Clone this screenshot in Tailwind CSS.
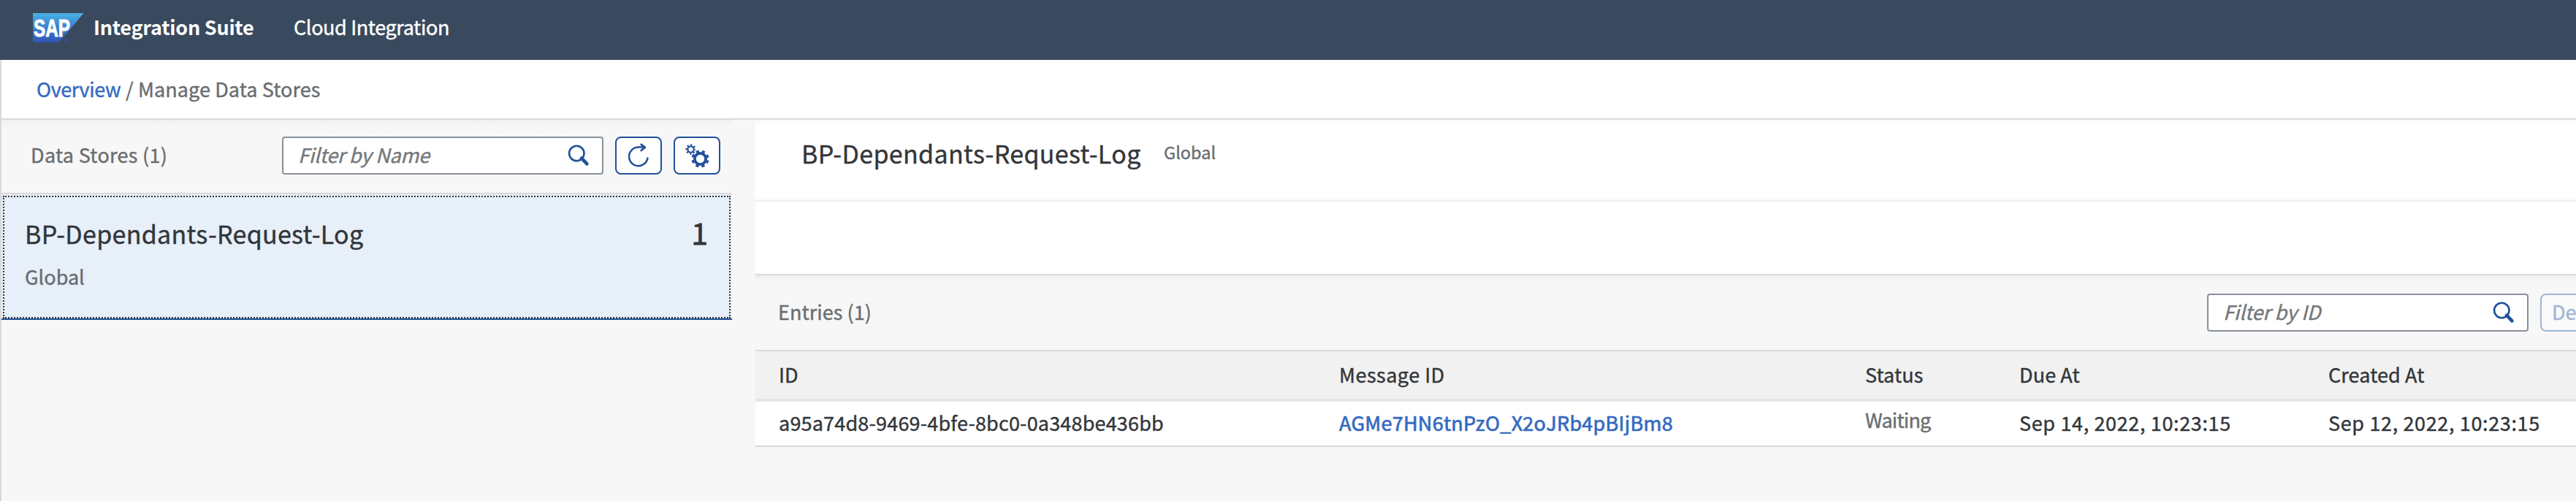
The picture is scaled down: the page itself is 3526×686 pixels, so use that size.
<!DOCTYPE html>
<html lang="en">
<head>
<meta charset="utf-8">
<title>Manage Data Stores</title>
<script src="https://cdn.jsdelivr.net/npm/@tailwindcss/browser@4"></script>
</head>
<body class="w-[3526px] h-[686px] overflow-hidden bg-[#f7f7f7] text-[#32363a] text-[27px] leading-[40px] whitespace-nowrap font-['Noto_Sans_CJK_SC','Noto_Sans',sans-serif] [-webkit-text-stroke:0.4px]">
<svg class="hidden">
  <symbol id="search" viewBox="0 0 30 30">
    <circle cx="12.3" cy="12" r="10.2" fill="none" stroke="#22519a" stroke-width="2.6"/>
    <path d="M19 18.7 L26.4 26.4" fill="none" stroke="#22519a" stroke-width="4.6" stroke-linecap="round"/>
  </symbol>
</svg>

<header class="h-[82px] bg-[#3a4a5e] text-white flex items-center pl-[45px]">
  <svg class="w-[70px] h-[40px] -mt-[6px] shrink-0" viewBox="0 0 70 40">
    <defs><linearGradient id="sap" x1="0" y1="0" x2="0" y2="1"><stop offset="0" stop-color="#4bb2e6"/><stop offset=".5" stop-color="#3b80cf"/><stop offset="1" stop-color="#2f56b4"/></linearGradient></defs>
    <path d="M0 0H69.5L36 40H0Z" fill="url(#sap)"/>
    <text x="1" y="32" font-family="Liberation Sans" font-weight="700" font-size="33" textLength="50" lengthAdjust="spacingAndGlyphs" fill="#fff" stroke="#fff" stroke-width="1">SAP</text>
    <circle cx="45.5" cy="37" r="1.8" fill="#2f56b4"/>
  </svg>
  <span class="w-[274px] ml-[13px] font-bold tracking-[-0.25px] -mt-[8px] [-webkit-text-stroke:0px]">Integration Suite</span>
  <span class="tracking-[-0.38px] -mt-[8px]">Cloud Integration</span>
</header>

<div class="h-[604px] border-l-2 border-[#d9d9d9] flex flex-col">
  <nav class="h-[82px] shrink-0 bg-white border-b-2 border-[#d9d9d9] flex items-center pl-[48px] text-[#6a6d70]">
    <span class="w-[122px] text-[#346ac0] tracking-[-0.4px]">Overview</span>
    <span class="w-[17px]">/</span>
    <span class="tracking-[0.08px]">Manage Data Stores</span>
  </nav>

  <div class="flex flex-1 min-h-0">
    <aside class="w-[1000px] shrink-0">
      <div class="h-[102px] border-b-2 border-[#d9d9d9] bg-linear-to-b from-[#f0f0f0] to-[#f7f7f7] to-[9px] flex items-center pb-[2px] pl-[40px] pr-4">
        <span class="flex-1 text-[#6a6d70] tracking-[0.3px] -mt-[2px]">Data Stores (1)</span>
        <div class="w-[440px] h-[52px] bg-white border-2 border-[#89919a] rounded-[4px] flex items-center justify-between pl-[20px] pr-[17px]">
          <span class="italic text-[#74777a] tracking-[-0.2px] -mt-[2px]">Filter by Name</span>
          <svg class="w-[30px] h-[30px]"><use href="#search"/></svg>
        </div>
        <div class="ml-4 w-[64px] h-[52px] bg-white border-2 border-[#22519a] rounded-[8px] flex items-center justify-center">
          <svg class="w-[32px] h-[36px]" viewBox="0 0 32 36" fill="none" stroke="#22519a" stroke-width="2.5" stroke-linecap="round" stroke-linejoin="round"><path d="M28.5 21.5A12.8 12.8 0 1 1 15.8 6.6H24.5"/><path d="M19.7 2.8L24.8 6.8L19.7 11" stroke-width="2.8"/></svg>
        </div>
        <div class="ml-4 w-[64px] h-[52px] bg-white border-2 border-[#22519a] rounded-[8px] flex items-center justify-center">
          <svg class="w-[34px] h-[34px]" viewBox="0 0 34 34" fill="none" stroke="#22519a">
            <circle cx="8.5" cy="8.5" r="4.2" stroke-width="2.2"/>
            <circle cx="8.5" cy="8.5" r="6" stroke-width="2.4" stroke-dasharray="2.1 2.612" stroke-dashoffset="1.05"/>
            <circle cx="21.5" cy="21.5" r="7.6" stroke-width="3.8"/>
            <circle cx="21.5" cy="21.5" r="10.5" stroke-width="3.2" stroke-dasharray="4.2 4.047" stroke-dashoffset="-2.02"/>
          </svg>
        </div>
      </div>
      <div class="h-[172px] bg-[#e7eff9] border-b-2 border-[#1f4f93] pt-[2px] px-[2px]">
        <div class="h-full border-2 border-dotted border-[#32363a] pl-[28px] pr-[29px]">
          <div class="flex items-center justify-between h-[60px] mt-[20px] leading-[60px]">
            <span class="text-[34px] tracking-[0.3px]">BP-Dependants-Request-Log</span>
            <span class="text-[41px] -mt-[6px] [-webkit-text-stroke:0.8px]">1</span>
          </div>
          <div class="text-[#6a6d70] mt-[9px]">Global</div>
        </div>
      </div>
    </aside>

    <main class="ml-[32px] flex-1 min-w-0 overflow-hidden">
      <div class="h-[112px] bg-linear-to-b from-[#f8f8f8] to-white to-[8px]">
        <div class="h-full bg-linear-to-t from-[#e9e9e9] via-[#f6f6f6] via-[2px] to-transparent to-[5px] flex items-center pl-[63px] pb-[20px]">
          <span class="w-[496px] text-[34px] tracking-[0.35px]">BP-Dependants-Request-Log</span>
          <span class="text-[23.5px] text-[#6a6d70] -mt-[4px]">Global</span>
        </div>
      </div>
      <div class="h-[101px] bg-white border-b-2 border-[#d9d9d9]"></div>
      <div class="h-[102px] bg-linear-to-b from-[#ededed] to-[#f7f7f7] to-[8px] flex items-center pl-[31px]">
        <span class="w-[1956px] shrink-0 text-[#6a6d70] tracking-[0.05px] -mt-[2px]">Entries (1)</span>
        <div class="w-[440px] h-[52px] shrink-0 bg-white border-2 border-[#89919a] rounded-[4px] flex items-center justify-between pl-[20px] pr-[17px]">
          <span class="italic text-[#74777a] tracking-[-0.1px] -mt-[2px]">Filter by ID</span>
          <svg class="w-[30px] h-[30px]"><use href="#search"/></svg>
        </div>
        <div class="ml-4 w-[110px] h-[52px] shrink-0 border-2 border-[#a1b6d5] text-[#a1b6d5] bg-[#fafafa] rounded-[8px] flex items-center pl-[14px]"><span class="-mt-[2px]">De</span></div>
      </div>
      <div class="border-y-2 border-[#d9d9d9] bg-white">
        <div class="h-[69px] bg-[#f1f1f1] border-b-4 border-[#e5e5e5] flex items-center pl-[32px] pb-[2px]">
          <span class="w-[767px]">ID</span>
          <span class="w-[720px] tracking-[0.5px]">Message ID</span>
          <span class="w-[211px] tracking-[0.1px]">Status</span>
          <span class="w-[423px] tracking-[0.1px]">Due At</span>
          <span class="tracking-[0.1px]">Created At</span>
        </div>
        <div class="h-[60px] flex items-center pl-[32px] pb-[2px]">
          <span class="w-[767px] tracking-[0.18px]">a95a74d8-9469-4bfe-8bc0-0a348be436bb</span>
          <span class="w-[720px] text-[#346ac0] tracking-[0.27px] [-webkit-text-stroke:0.7px]">AGMe7HN6tnPzO_X2oJRb4pBIjBm8</span>
          <span class="w-[211px] text-[#6a6d70] tracking-[-0.8px] -mt-[8px]">Waiting</span>
          <span class="w-[423px] tracking-[0.64px]">Sep 14, 2022, 10:23:15</span>
          <span class="tracking-[0.64px]">Sep 12, 2022, 10:23:15</span>
        </div>
      </div>
    </main>
  </div>
</div>
</body>
</html>
